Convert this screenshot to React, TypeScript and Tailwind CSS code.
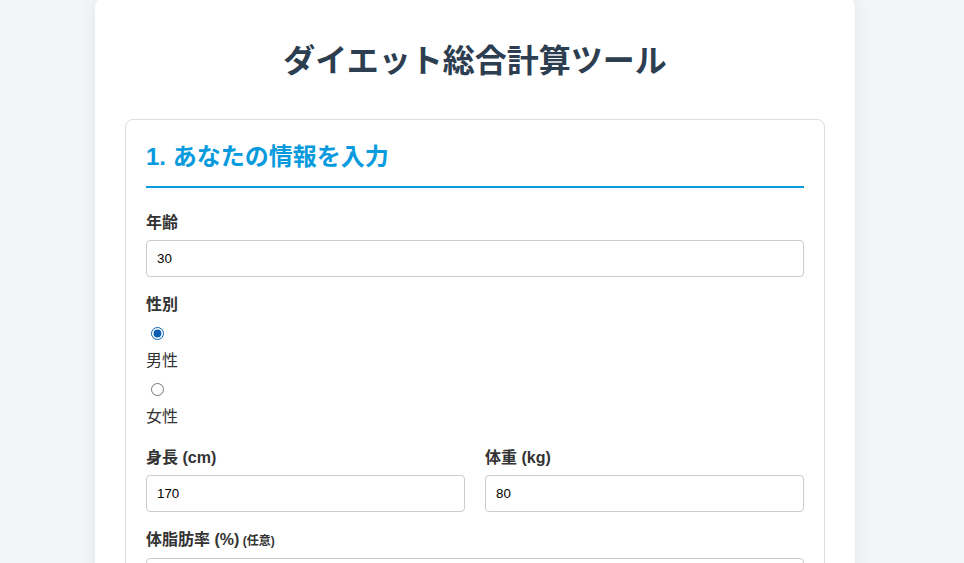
import React from "react";

const font = "font-['Liberation_Sans','Noto_Sans_CJK_JP',sans-serif]";

function Field({
  label,
  note,
  value,
  className = "",
}: {
  label: string;
  note?: string;
  value: string;
  className?: string;
}) {
  return (
    <div className={className}>
      <label className="mb-[6px] block text-[16px] font-bold leading-[22px] text-[#333]">
        {label}
        {note ? <span className="text-[12px]"> {note}</span> : null}
      </label>
      <input
        type="text"
        defaultValue={value}
        className="block h-[37px] w-full rounded-[4px] border border-[#ccc] bg-white px-[10px] text-[13.333px] text-black outline-none"
      />
    </div>
  );
}

export default function App() {
  const [gender, setGender] = React.useState("male");

  return (
    <div className={`min-h-screen bg-[#f3f6f9] ${font}`}>
      <div className="ml-[95px] mt-[-4px] w-[760px] rounded-[12px] bg-white px-[30px] pt-[42px] pb-[30px] shadow-[0_0_18px_rgba(0,0,0,0.07)]">
        <h1 className="mb-[35px] text-center text-[32px] font-bold leading-[46px] text-[#2c3e50]">
          ダイエット総合計算ツール
        </h1>

        <section className="rounded-[8px] border border-[#ddd] p-[20px]">
          <h2 className="mb-[24px] border-b-2 border-[#079bde] pb-[12px] text-[24px] font-bold leading-[34px] text-[#079bde]">
            1. あなたの情報を入力
          </h2>

          <Field label="年齢" value="30" className="mb-[17px]" />

          <div className="mb-[19px]">
            <label className="block text-[16px] font-bold leading-[22px] text-[#333]">
              性別
            </label>
            {[
              { id: "male", text: "男性" },
              { id: "female", text: "女性" },
            ].map((opt) => (
              <div key={opt.id}>
                <input
                  type="radio"
                  name="gender"
                  checked={gender === opt.id}
                  onChange={() => setGender(opt.id)}
                  className="mt-[11px] mb-[10px] ml-[5px] block h-[13px] w-[13px] accent-[#0a5fb4]"
                />
                <div className="text-[16px] leading-[22px] text-[#333]">
                  {opt.text}
                </div>
              </div>
            ))}
          </div>

          <div className="mb-[17px] grid grid-cols-2 gap-[20px]">
            <Field label="身長 (cm)" value="170" />
            <Field label="体重 (kg)" value="80" />
          </div>

          <Field label="体脂肪率 (%)" note="(任意)" value="" />
        </section>
      </div>
    </div>
  );
}
